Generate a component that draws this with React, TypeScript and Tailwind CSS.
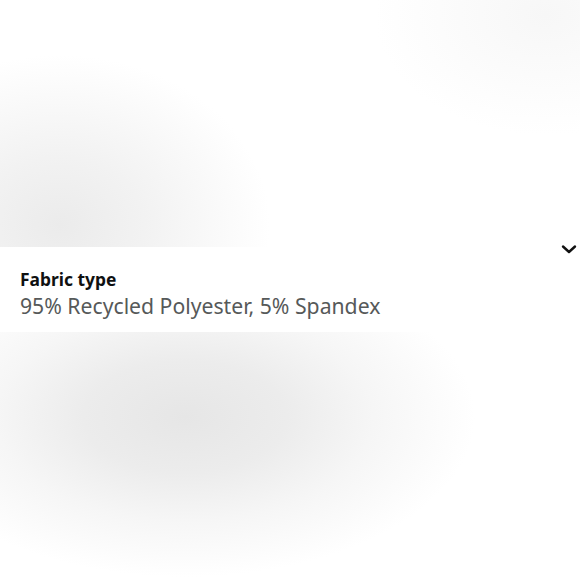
import React from "react";

const App = () => {
  return (
    <div
      className="w-[580px] h-[580px] flex flex-col bg-white overflow-hidden"
      style={{ fontFamily: '"Noto Sans", "Open Sans", Arial, sans-serif' }}
    >
      {/* blurred product photo above */}
      <div className="h-[247px] shrink-0 bg-[radial-gradient(ellipse_210px_170px_at_60px_225px,#ebebeb_0%,#f2f2f2_40%,rgba(255,255,255,0)_100%),radial-gradient(ellipse_170px_120px_at_545px_15px,#f7f7f7_0%,rgba(255,255,255,0)_100%)]" />

      <div className="relative h-[85px] shrink-0 bg-white px-5 pt-[21px]">
        <svg
          className="absolute right-[2px] top-[-4px]"
          width="18"
          height="12"
          viewBox="0 0 18 12"
          fill="none"
        >
          <path
            d="M3 3.5l6 5.5 6-5.5"
            stroke="#111"
            strokeWidth="2.4"
            strokeLinecap="round"
            strokeLinejoin="round"
          />
        </svg>
        <div className="text-[17.4px] leading-[23px] font-bold text-[#0f1111]">
          Fabric type
        </div>
        <div className="text-[21.2px] leading-[30px] text-[#565959]">
          95% Recycled Polyester, 5% Spandex
        </div>
      </div>

      {/* blurred product photo below */}
      <div className="flex-1 bg-[radial-gradient(ellipse_290px_160px_at_185px_85px,#e6e6e6_0%,#ececec_35%,#f6f6f6_65%,rgba(255,255,255,0)_100%)]" />
    </div>
  );
};

export default App;
